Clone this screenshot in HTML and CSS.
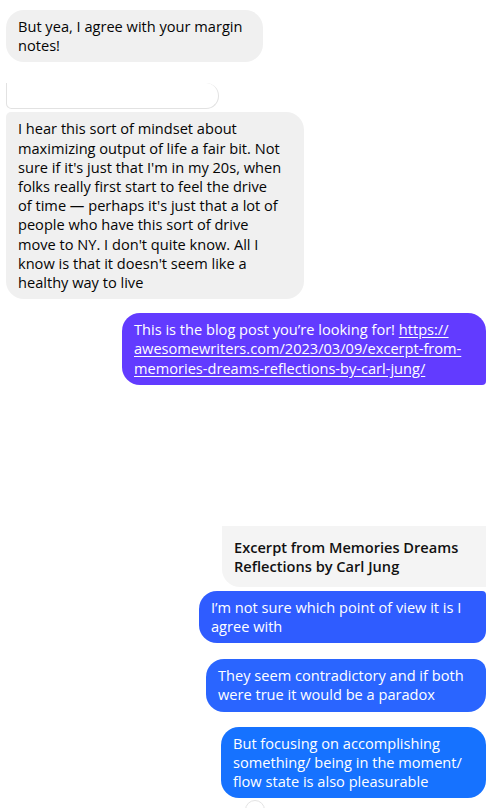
FILE: index.html
```html
<!DOCTYPE html>
<html>
	<head>
		<meta charset="UTF-8">
		<meta name="viewport" content="width=device-width, initial-scale=1.0">
		<title>Chat</title>
		<link rel="stylesheet" href="styles.css">
	</head>
	<body>
		<div class="thread">
			<div class="bubble in first">But yea, I agree with your margin<br>notes!</div>

			<div class="reply-stub"></div>

			<div class="bubble in long">I hear this sort of mindset about<br>maximizing output of life a fair bit. Not<br>sure if it's just that I'm in my 20s, when<br>folks really first start to feel the drive<br>of time — perhaps it's just that a lot of<br>people who have this sort of drive<br>move to NY. I don't quite know. All I<br>know is that it doesn't seem like a<br>healthy way to live</div>

			<div class="bubble out link">This is the blog post you’re looking for! <a href="#">https://<br>awesomewriters.com/2023/03/09/excerpt-from-<br>memories-dreams-reflections-by-carl-jung/</a></div>

			<div class="preview">
				<div class="preview-img"></div>
				<div class="preview-title">Excerpt from Memories Dreams<br>Reflections by Carl Jung</div>
			</div>

			<div class="bubble out blue1">I’m not sure which point of view it is I<br>agree with</div>
			<div class="bubble out blue2">They seem contradictory and if both<br>were true it would be a paradox</div>
			<div class="bubble out blue3">But focusing on accomplishing<br>something/ being in the moment/<br>flow state is also pleasurable</div>
			<div class="reaction"></div>
		</div>
	</body>
</html>
```

FILE: styles.css
```css
html,
body {
	margin: 0;
	padding: 0;
	height: 100%;
	overflow: hidden;
	background-color: #fff;
}

body {
	font-family: "Open Sans", "Noto Sans", sans-serif;
	font-size: 14.6px;
	line-height: 19.2px;
	color: #050505;
}

.thread {
	display: flex;
	flex-direction: column;
	padding: 10px 4px 0 6px;
}

.bubble {
	box-sizing: border-box;
	padding: 7px 12px;
	border-radius: 18px;
	white-space: nowrap;
}

.in {
	align-self: flex-start;
	background-color: #f0f0f0;
}

.out {
	align-self: flex-end;
	color: #fff;
}

.first {
	width: 257px;
}

.reply-stub {
	box-sizing: border-box;
	width: 213px;
	height: 26px;
	margin-top: 21px;
	border: 1px solid #e2e2e2;
	border-top: none;
	border-radius: 0 14px 14px 6px;
}

.long {
	width: 298px;
	margin-top: 3px;
	border-radius: 5px 18px 18px 18px;
}

.link {
	width: 364px;
	margin-top: 14px;
	background-color: #623bff;
	border-radius: 18px 18px 4px 18px;
}

.link a {
	color: #fff;
	text-decoration: underline;
	text-underline-offset: 2px;
}

.preview {
	align-self: flex-end;
	width: 264px;
	margin-top: 14px;
}

.preview-img {
	height: 127px;
	background-color: #fff;
}

.preview-title {
	box-sizing: border-box;
	padding: 12px 12px 10.6px;
	background-color: #f4f4f4;
	border-radius: 0 0 0 18px;
	font-weight: 600;
	color: #111;
}

.blue1 {
	width: 287px;
	margin-top: 4px;
	background-color: #2f5cff;
	border-radius: 18px 4px 12px 18px;
}

.blue2 {
	width: 280px;
	margin-top: 16px;
	background-color: #2a65ff;
	border-radius: 18px 12px 18px 18px;
}

.blue3 {
	width: 265px;
	margin-top: 15px;
	background-color: #1672ff;
	border-radius: 18px;
}

.reaction {
	align-self: flex-start;
	flex-shrink: 0;
	width: 20px;
	height: 20px;
	margin: 2px 0 0 239px;
	box-sizing: border-box;
	border: 1px solid #e4e4e4;
	border-radius: 50%;
	background-color: #fff;
}
```
